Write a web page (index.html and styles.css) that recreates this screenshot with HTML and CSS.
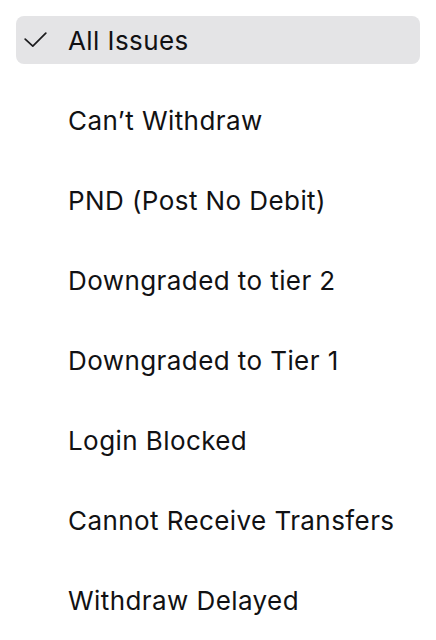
FILE: index.html
```html
<!DOCTYPE html>
<html>
<head>
<meta charset="utf-8">
<link rel="stylesheet" href="styles.css">
</head>
<body>
<ul class="menu">
  <li class="item selected">
    <svg class="check" width="24" height="24" viewBox="0 0 24 24"><path d="M1.2 11.2 L8.8 18.2 L21.8 5.2" fill="none" stroke="#1c1c1e" stroke-width="1.7" stroke-linecap="round" stroke-linejoin="round"/></svg>
    <span>All Issues</span>
  </li>
  <li class="item"><span class="check"></span><span>Can’t Withdraw</span></li>
  <li class="item"><span class="check"></span><span>PND (Post No Debit)</span></li>
  <li class="item"><span class="check"></span><span>Downgraded to tier 2</span></li>
  <li class="item"><span class="check"></span><span>Downgraded to Tier 1</span></li>
  <li class="item"><span class="check"></span><span>Login Blocked</span></li>
  <li class="item"><span class="check"></span><span>Cannot Receive Transfers</span></li>
  <li class="item"><span class="check"></span><span>Withdraw Delayed</span></li>
</ul>
</body>
</html>
```
FILE: styles.css
```css
html, body {
  margin: 0;
  padding: 0;
  background: #ffffff;
}
body {
  font-family: "Inter", "Liberation Sans", sans-serif;
  color: #111113;
}
.menu {
  list-style: none;
  margin: 0;
  padding: 16px 16px 0 16px;
  display: flex;
  flex-direction: column;
  gap: 32px;
}
.item {
  height: 48px;
  display: flex;
  align-items: center;
  gap: 20px;
  padding-left: 8px;
  border-radius: 8px;
  font-size: 26px;
  letter-spacing: 0.42px;
}
.item.selected {
  background: #e4e4e6;
}
.check {
  width: 24px;
  height: 24px;
  flex: none;
  display: block;
}
```
